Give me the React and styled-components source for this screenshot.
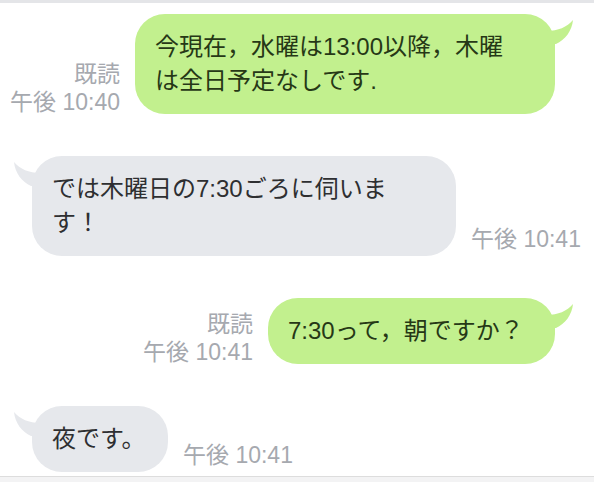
import React from "react";
import styled, { createGlobalStyle, css } from "styled-components";

const GlobalStyle = createGlobalStyle`
  html, body {
    margin: 0;
    padding: 0;
    background: #ffffff;
    overflow: hidden;
  }
  body {
    font-family: "Liberation Sans", "Noto Sans CJK JP", sans-serif;
  }
`;

const Screen = styled.div`
  display: flex;
  flex-direction: column;
  width: 594px;
  height: 482px;
  background: #ffffff;
`;

const TopStrip = styled.div`
  height: 3px;
  background: #e4e5e8;
  flex: none;
`;

const Thread = styled.div`
  display: flex;
  flex-direction: column;
  gap: 42px;
  padding-top: 11px;
`;

const Row = styled.div`
  display: flex;
  align-items: flex-end;
  gap: 15px;
  ${(p) =>
    p.$out
      ? css`
          justify-content: flex-end;
          padding-right: 39px;
        `
      : css`
          justify-content: flex-start;
          padding-left: 32px;
        `}
`;

const Meta = styled.div`
  display: flex;
  flex-direction: column;
  align-items: ${(p) => (p.$out ? "flex-end" : "flex-start")};
  font-family: "Liberation Sans", "Noto Sans CJK JP", sans-serif;
  font-size: 23px;
  line-height: 28px;
  color: #a6a9af;
  white-space: nowrap;
  margin-bottom: ${(p) => (p.$out ? "-2px" : "3px")};
`;

const Bubble = styled.div`
  position: relative;
  box-sizing: border-box;
  padding: 16px 20px;
  border-radius: 30px;
  font-family: "Liberation Sans", "Noto Sans CJK JP", sans-serif;
  font-size: 24px;
  line-height: 34px;
  white-space: nowrap;
  background: ${(p) => (p.$out ? "#c2f08e" : "#e6e8ec")};
  color: ${(p) => (p.$out ? "#263816" : "#2e2f31")};
  ${(p) => p.$w && css`width: ${p.$w}px;`}
`;

const Tail = styled.svg`
  position: absolute;
  top: 0;
  width: 30px;
  height: 34px;
  ${(p) =>
    p.$out
      ? css`
          right: -20px;
        `
      : css`
          left: -20px;
          transform: scaleX(-1);
        `}
`;

const Footer = styled.div`
  margin-top: auto;
  height: 5px;
  border-top: 1px solid #dddddd;
  background: #f3f3f4;
  flex: none;
`;

function BubbleTail({ out }) {
  return (
    <Tail $out={out} viewBox="0 0 30 34">
      <path
        d="M2 17 C 13 17 22 13 28 6 C 27 17 20 26 11 30 L 2 30 Z"
        fill={out ? "#c2f08e" : "#e6e8ec"}
      />
    </Tail>
  );
}

function Message({ out, read, time, width, children }) {
  const meta = (
    <Meta $out={out}>
      {read && <span>既読</span>}
      <span>{time}</span>
    </Meta>
  );
  const bubble = (
    <Bubble $out={out} $w={width}>
      <BubbleTail out={out} />
      {children}
    </Bubble>
  );
  return (
    <Row $out={out}>
      {out ? (
        <>
          {meta}
          {bubble}
        </>
      ) : (
        <>
          {bubble}
          {meta}
        </>
      )}
    </Row>
  );
}

export default function App() {
  return (
    <>
      <GlobalStyle />
      <Screen>
        <TopStrip />
        <Thread>
          <Message out read time="午後 10:40" width={420}>
            今現在，水曜は13:00以降，木曜
            <br />
            は全日予定なしです.
          </Message>
          <Message time="午後 10:41" width={424}>
            では木曜日の7:30ごろに伺いま
            <br />
            す！
          </Message>
          <Message out read time="午後 10:41" width={287}>
            7:30って，朝ですか？
          </Message>
          <Message time="午後 10:41" width={136}>
            夜です。
          </Message>
        </Thread>
        <Footer />
      </Screen>
    </>
  );
}
